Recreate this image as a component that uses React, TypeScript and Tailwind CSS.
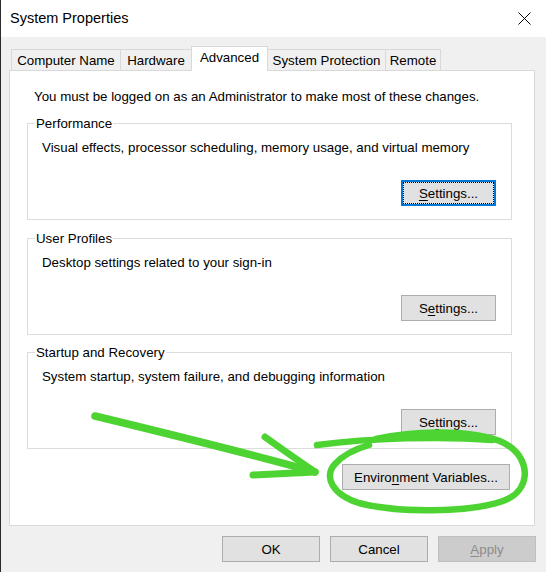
import React from "react";

type TabProps = { label: string; w: string; active?: boolean; first?: boolean };

const Tab: React.FC<TabProps> = ({ label, w, active, first }) => (
  <div
    className={
      "flex items-center justify-center border border-b-0 border-[#d9d9d9] " +
      w +
      (first ? "" : " -ml-px") +
      (active ? " relative z-10 -mb-px h-[25px] bg-white pb-[4px]" : " h-[21px] bg-[#f0f0f0]")
    }
  >
    {label}
  </div>
);

type BtnProps = { children: React.ReactNode; w?: string; focused?: boolean; disabled?: boolean };

const Btn: React.FC<BtnProps> = ({ children, w = "w-[95px]", focused, disabled }) => {
  if (focused) {
    return (
      <div className={"h-[26px] border-2 border-[#0078d7] bg-[#e5f1fb] " + w}>
        <div className="flex h-full w-full items-center justify-center border border-dotted border-black bg-[#e1e1e1]">
          {children}
        </div>
      </div>
    );
  }
  return (
    <div
      className={
        "flex h-[26px] items-center justify-center border " +
        w +
        (disabled
          ? " border-[#bfbfbf] bg-[#cccccc] text-[#8c8c8c]"
          : " border-[#adadad] bg-[#e1e1e1]")
      }
    >
      {children}
    </div>
  );
};

const Key: React.FC<{ children: React.ReactNode }> = ({ children }) => (
  <span className="underline underline-offset-[2px]">{children}</span>
);

type GroupProps = { title: string; text: string; button: React.ReactNode; mt: string };

const Group: React.FC<GroupProps> = ({ title, text, button, mt }) => (
  <div className={"ml-[17px] flex h-[97px] w-[485px] flex-col border border-[#dcdcdc] " + mt}>
    <div className="-mt-[8px] ml-[7px] w-fit bg-white px-[1px]">{title}</div>
    <div className="mt-[9px] pl-[14px]">{text}</div>
    <div className="mt-[25px] flex justify-end pr-[15px]">{button}</div>
  </div>
);

const Scribble: React.FC = () => (
  <svg
    className="pointer-events-none absolute left-0 top-0"
    width="546"
    height="572"
    viewBox="0 0 546 572"
    fill="none"
    stroke="#4dd432"
    strokeLinecap="round"
    strokeLinejoin="round"
  >
    {/* arrow */}
    <path d="M94 416 C 160 432 250 454 314 472" strokeWidth="7.5" />
    <path d="M264 437 C 282 450 298 461 314 472" strokeWidth="7" />
    <path d="M252 475 C 275 474 296 473 314 472" strokeWidth="7" />
    {/* loop round the button */}
    <path d="M316 445 C 370 438 440 436 491 440" strokeWidth="6.5" />
    <path
      d="M375 439 C 420 429 485 430 508 446 C 530 461 530 491 502 501 C 468 513 395 513 358 503 C 332 495 322 477 334 464 C 342 455 354 449 368 445"
      strokeWidth="6.5"
    />
  </svg>
);

const App: React.FC = () => {
  return (
    <div className="relative flex h-[572px] w-[546px] flex-col overflow-hidden border-l border-[#2b2b2b] font-['Liberation_Sans',Arial,sans-serif] text-[13.3px] leading-[15px] text-black">
      {/* Title bar */}
      <div className="flex h-[37px] shrink-0 items-center justify-between bg-white pl-[9px] pr-[15px]">
        <span className="text-[14.5px]">System Properties</span>
        <svg width="13" height="13" viewBox="0 0 13 13" stroke="#000" strokeWidth="1">
          <path d="M0.5 0.5 L12.5 12.5 M12.5 0.5 L0.5 12.5" />
        </svg>
      </div>

      <div className="flex flex-1 flex-col bg-[#f0f0f0] pl-[8px] pt-[9px]">
        {/* Tabs */}
        <div className="flex h-[24px] items-end pl-[2px]">
          <Tab label="Computer Name" w="w-[110px]" first />
          <Tab label="Hardware" w="w-[72px]" />
          <Tab label="Advanced" w="w-[77px]" active />
          <Tab label="System Protection" w="w-[119px]" />
          <Tab label="Remote" w="w-[56px]" />
        </div>

        {/* Advanced page */}
        <div className="flex h-[456px] w-[526px] flex-col border border-[#d9d9d9] bg-white">
          <div className="mt-[18px] pl-[24px]">
            You must be logged on as an Administrator to make most of these changes.
          </div>

          <Group
            mt="mt-[19px]"
            title="Performance"
            text="Visual effects, processor scheduling, memory usage, and virtual memory"
            button={
              <Btn focused>
                <span>
                  <Key>S</Key>ettings...
                </span>
              </Btn>
            }
          />
          <Group
            mt="mt-[18px]"
            title="User Profiles"
            text="Desktop settings related to your sign-in"
            button={
              <Btn>
                <span>
                  S<Key>e</Key>ttings...
                </span>
              </Btn>
            }
          />
          <Group
            mt="mt-[17px]"
            title="Startup and Recovery"
            text="System startup, system failure, and debugging information"
            button={
              <Btn>
                <span>
                  Se<Key>t</Key>tings...
                </span>
              </Btn>
            }
          />

          <div className="mt-[15px] flex justify-end pr-[24px]">
            <Btn w="w-[168px]">
              <span>
                Enviro<Key>n</Key>ment Variables...
              </span>
            </Btn>
          </div>
        </div>

        {/* Dialog buttons */}
        <div className="mt-[10px] flex justify-end gap-[10px] pr-[10px]">
          <Btn w="w-[98px]">OK</Btn>
          <Btn w="w-[98px]">Cancel</Btn>
          <Btn w="w-[98px]" disabled>
            <span>
              <Key>A</Key>pply
            </span>
          </Btn>
        </div>
      </div>

      <Scribble />
    </div>
  );
};

export default App;
